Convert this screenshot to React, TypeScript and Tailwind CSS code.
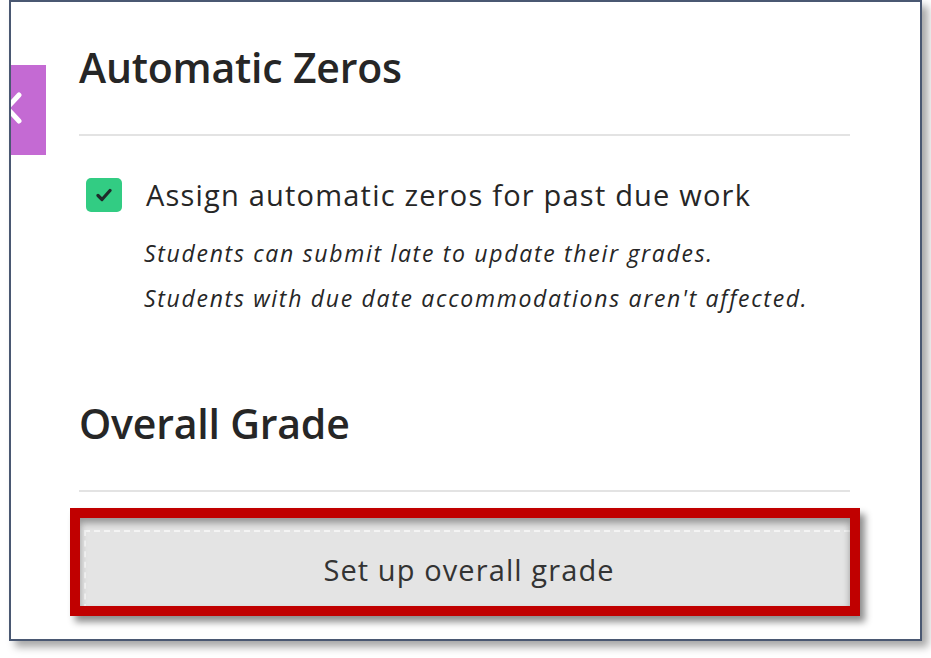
import React from "react";

export default function App() {
  return (
    <div className="w-[931px] h-[658px] bg-white relative overflow-hidden font-['Open_Sans',sans-serif]">
      <div className="ml-[9px] w-[913px] h-[641px] border-2 border-[#4a5872] bg-white relative shadow-[6px_6px_8px_rgba(0,0,0,0.35)]">
        {/* purple collapse tab */}
        <div className="absolute left-0 top-[63px] w-[35px] h-[90px] bg-[#c46ad3] overflow-hidden">
          <svg className="absolute -left-[10px] top-[26px]" width="22" height="34" viewBox="0 0 22 34">
            <path d="M18 4 L6 17 L18 30" fill="none" stroke="white" strokeWidth="5" strokeLinecap="round" />
          </svg>
        </div>

        <div className="pl-[68px] pr-[70px] flex flex-col">
          <h2 className="mt-[40px] text-[41px] leading-[50px] font-semibold text-[#262626] tracking-[-0.2px]">
            Automatic Zeros
          </h2>
          <div className="mt-[42px] h-[2px] bg-[#e3e3e3]" />

          <div className="mt-[41px] flex items-center pl-[7px]">
            <div className="w-[36px] h-[34px] rounded-[5px] bg-[#32cc83] flex items-center justify-center">
              <svg width="16" height="14" viewBox="0 0 16 14">
                <path d="M2 7.5 L6 11.5 L14 2.5" fill="none" stroke="#1f2a2a" strokeWidth="3.2" strokeLinecap="round" strokeLinejoin="round" />
              </svg>
            </div>
            <span className="ml-[24px] text-[29px] leading-[36px] tracking-[1.2px] text-[#262626]">
              Assign automatic zeros for past due work
            </span>
          </div>
          <div className="pl-[65px] mt-[18px] flex flex-col text-[23px] leading-[45px] italic tracking-[1.7px] text-[#262626]">
            <span>Students can submit late to update their grades.</span>
            <span>Students with due date accommodations aren't affected.</span>
          </div>

          <h2 className="mt-[77px] text-[41px] leading-[50px] font-semibold text-[#262626] tracking-[-0.2px]">
            Overall Grade
          </h2>
          <div className="mt-[42px] h-[2px] bg-[#e3e3e3]" />

          <div className="mt-[16px] -ml-[9px] w-[790px] h-[108px] border-[10px] border-[#c00000] bg-[#e4e4e4] shadow-[5px_6px_7px_rgba(0,0,0,0.45)] overflow-hidden relative">
            <div className="absolute inset-0 shadow-[inset_0_5px_7px_rgba(0,0,0,0.35)] pointer-events-none" />
            <div className="mt-[12px] ml-[4px] h-[80px] border-t-2 border-l-2 border-dashed border-[#f4f4f4] flex items-center justify-center">
              <span className="text-[29px] tracking-[1.1px] text-[#333333] -mt-[2px] ml-[2px]">Set up overall grade</span>
            </div>
          </div>
        </div>
      </div>
    </div>
  );
}
